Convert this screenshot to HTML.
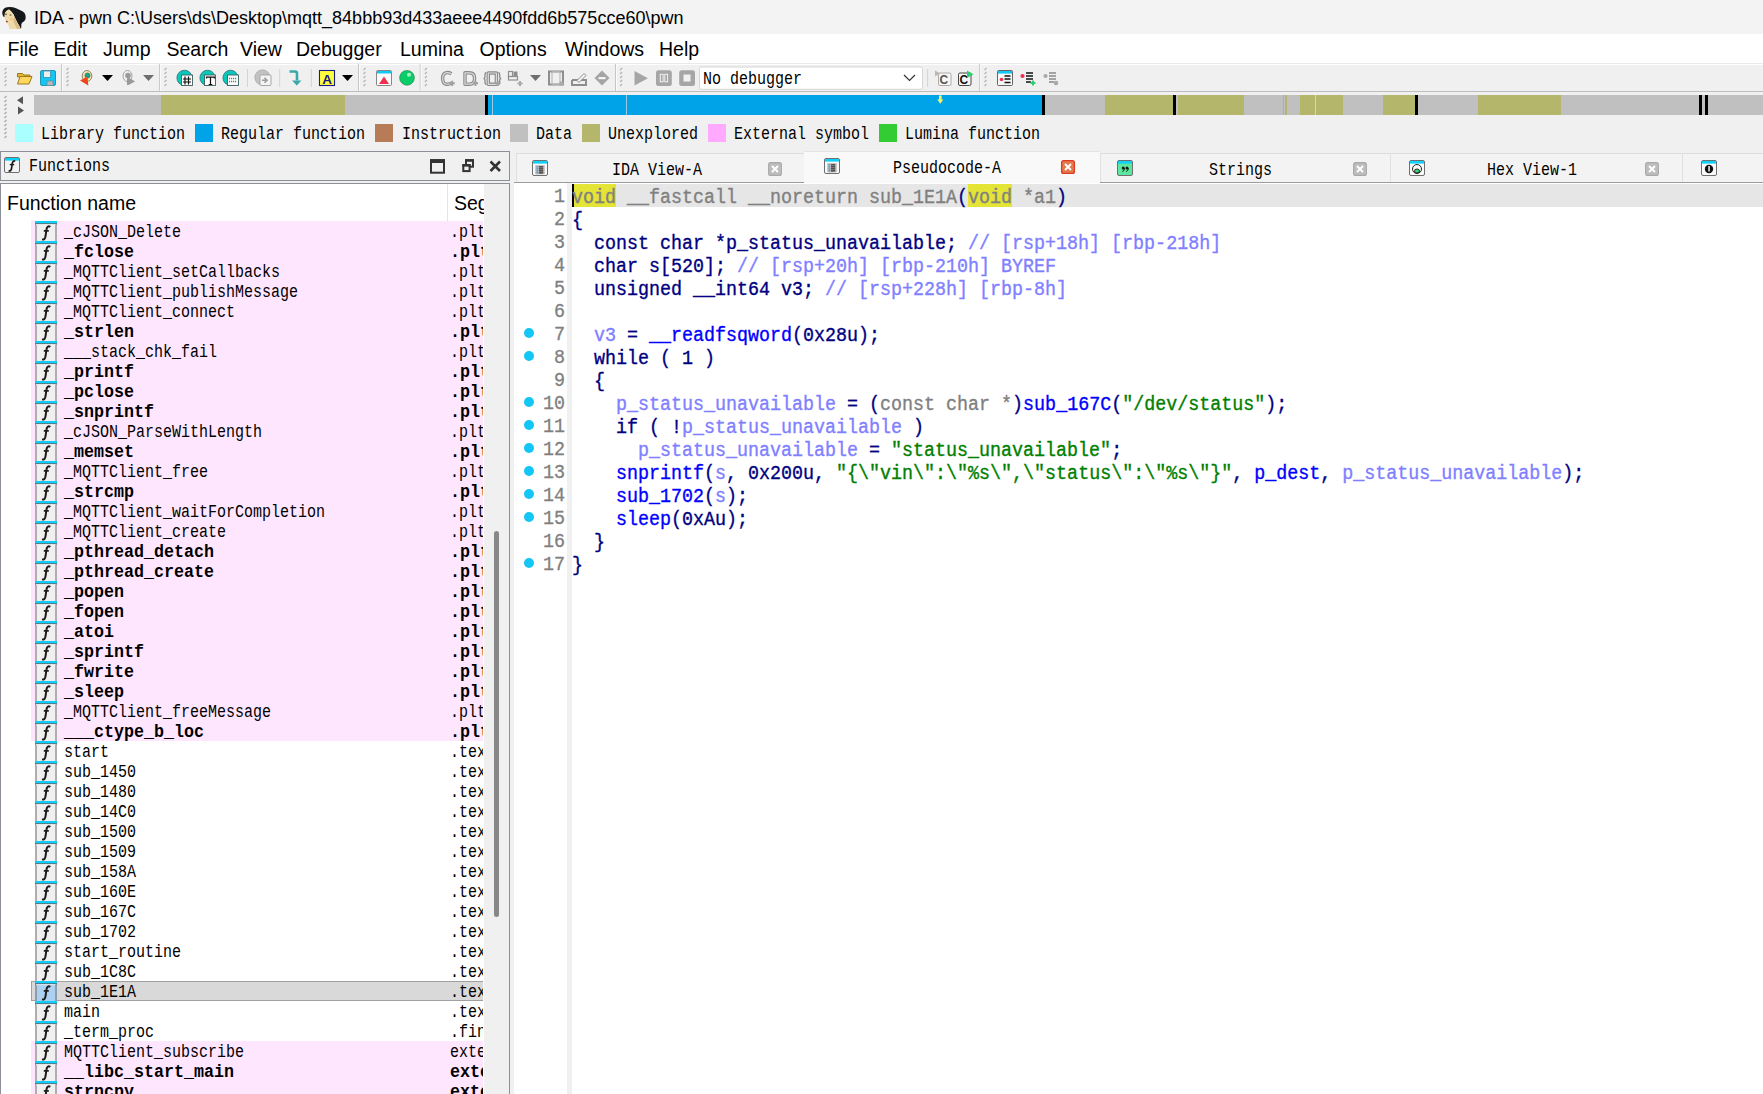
<!DOCTYPE html><html><head><meta charset="utf-8"><title>IDA</title><style>
*{margin:0;padding:0;box-sizing:border-box}
html,body{width:1763px;height:1094px;overflow:hidden;background:#f0f0f0;position:relative;font-family:"Liberation Sans",sans-serif}
.a{position:absolute}
.mono{font-family:"Liberation Mono",monospace}
#title{left:0;top:0;width:1763px;height:34px;background:#f3f3f3}
#menu{left:0;top:34px;width:1763px;height:29px;background:#fff}
.mi{position:absolute;top:36px;font-size:19.5px;color:#000;line-height:26px;white-space:pre}
#tb{left:0;top:63px;width:1763px;height:29px;background:#f0f0f0;border-top:1px solid #ebebeb;border-bottom:1px solid #bdbdbd;box-shadow:inset 0 1px 0 #fdfdfd}
.nav{position:absolute;top:95px;height:20px}
.leg{position:absolute;top:124px;width:18px;height:18px}
.legt{position:absolute;top:124px;font-size:17.5px;line-height:20px;color:#000;white-space:pre;font-family:"Liberation Mono",monospace;transform-origin:0 0;transform:scaleX(0.857)}
.code{position:absolute;left:572px;font-family:"Liberation Mono",monospace;font-size:19.5px;line-height:23px;height:23px;white-space:pre;color:#000080;transform-origin:0 0;transform:scaleX(0.9402);-webkit-text-stroke:0.35px currentColor}
.ln{position:absolute;left:465px;width:100px;text-align:right;font-family:"Liberation Mono",monospace;font-size:19.5px;line-height:23px;height:23px;color:#808080;transform-origin:100% 0;transform:scaleX(0.9402);-webkit-text-stroke:0.3px currentColor}
.dot{position:absolute;left:523.5px;width:10px;height:10px;border-radius:50%;background:#13c6f5}
.g{color:#808080}.v{color:#8080ff}.f{color:#0000ff}.s{color:#008000}.n{color:#000080}
.yl{background:#e4e436}
.row{position:absolute;left:31px;width:452px;height:20px}
.fn{position:absolute;left:64px;font-family:"Liberation Mono",monospace;font-size:17.5px;line-height:20px;color:#000;white-space:pre;transform-origin:0 0;transform:scaleX(0.857)}
.fn.b{font-weight:bold;transform:scaleX(0.952)}
.sgw{position:absolute;left:450px;width:33px;height:20px;overflow:hidden}
.sg{position:absolute;left:0;top:1px;font-family:"Liberation Mono",monospace;font-size:17.5px;line-height:20px;color:#000;white-space:pre;transform-origin:0 0;transform:scaleX(0.857)}
.sg.b{font-weight:bold;transform:scaleX(0.952)}
.ss{position:absolute;font-family:"Liberation Mono",monospace;font-size:17.5px;line-height:20px;color:#000;white-space:pre;transform-origin:0 0;transform:scaleX(0.857)}
.ic{position:absolute;left:35px;width:22px;height:20px}
</style></head><body>
<svg width="0" height="0" style="position:absolute"><defs><g id="fi"><rect x="0" y="0" width="22" height="2.6" fill="#10cdfa"/><rect x="0" y="2.4" width="22" height="0.9" fill="#3a4a50"/><rect x="0.5" y="3" width="1" height="17" fill="#6c6c6c"/><rect x="20.5" y="3" width="1" height="17" fill="#6c6c6c"/><rect x="1" y="3.3" width="19.5" height="0.8" fill="#fafafa"/><path d="M15.3 5.9C13.6 4.7 12 5.4 11.5 8.3L10.5 15.3C10.2 17.6 9 18.9 7 18.4" fill="none" stroke="#1c1c1c" stroke-width="2"/><path d="M8.8 9.9H13.8" stroke="#1c1c1c" stroke-width="1.7"/></g></defs></svg>
<div id="title" class="a"></div>
<div class="a" style="left:34px;top:5px;font-size:18px;line-height:26px;color:#000;white-space:pre">IDA - pwn C:\Users\ds\Desktop\mqtt_84bbb93d433aeee4490fdd6b575cce60\pwn</div>
<div id="menu" class="a"></div>
<div class="mi" style="left:7.5px">File</div>
<div class="mi" style="left:53.5px">Edit</div>
<div class="mi" style="left:103px">Jump</div>
<div class="mi" style="left:166.5px">Search</div>
<div class="mi" style="left:240px">View</div>
<div class="mi" style="left:296px">Debugger</div>
<div class="mi" style="left:400px">Lumina</div>
<div class="mi" style="left:479.5px">Options</div>
<div class="mi" style="left:565px">Windows</div>
<div class="mi" style="left:659px">Help</div>
<div id="tb" class="a"></div>
<svg class="a" style="left:0;top:0" width="1763" height="95" viewBox="0 0 1763 95"><path d="M2.3 12Q3 8 7 7.2Q12 6.5 16 8.3Q19.5 9.8 22 11Q25.2 12.5 25.6 16Q26 20 23.8 21.5Q21.5 22.5 21.3 24.5Q21.5 27 21 29L20.8 29Q19.5 26 17.5 23Q16 20 14.5 17Q14 13.5 9 9.5Q6 10.5 5 13Q4.5 15 4.8 17L3.2 16.5Q2 14.5 2.3 12Z" fill="#15171a"/><path d="M9 9.5Q14 13.5 14.5 17Q16 20 17.5 23Q19.5 26 20.8 29L9.5 29Q9 26 7.5 23.5Q5.5 21.5 5 19Q4.5 16 4.8 13.5Q5.5 10.5 9 9.5Z" fill="#efdcaa"/><path d="M14.5 17Q16 20 17.5 23Q19.5 26 20.8 29L17 29Q15 25 13.5 22Q13 19.5 14.5 17Z" fill="#d9bd88"/><ellipse cx="11.5" cy="19" rx="2" ry="1.5" fill="#f0b890" opacity="0.6"/><ellipse cx="6" cy="14.2" rx="1.1" ry="0.8" fill="#6a5a40"/><ellipse cx="10.5" cy="15" rx="1.2" ry="0.8" fill="#7a6a50"/><path d="M5.8 21Q7.2 20.5 8.3 21.3Q7.6 22.6 6.2 22.4z" fill="#a8402a"/><line x1="4.5" y1="70" x2="6.5" y2="68" stroke="#b2b2b2" stroke-width="1.1"/><line x1="4.5" y1="74" x2="6.5" y2="72" stroke="#b2b2b2" stroke-width="1.1"/><line x1="4.5" y1="78" x2="6.5" y2="76" stroke="#b2b2b2" stroke-width="1.1"/><line x1="4.5" y1="82" x2="6.5" y2="80" stroke="#b2b2b2" stroke-width="1.1"/><line x1="4.5" y1="86" x2="6.5" y2="84" stroke="#b2b2b2" stroke-width="1.1"/><path d="M17.5 73.5h5l1.5 1.5h6v2h-12.5z" fill="#e9b52e" stroke="#9c7a22" stroke-width="1"/><path d="M17.5 84h11.5l3-7.5h-12z" fill="#ffd75e" stroke="#9c7a22" stroke-width="1"/><rect x="40.5" y="70.5" width="15" height="15" rx="1.5" fill="#12c6f3" stroke="#2a93b3"/><rect x="43.5" y="71" width="7" height="6.5" fill="#eeeeee" stroke="#3a8fb0" stroke-width="0.8"/><rect x="47" y="81" width="6" height="4.5" fill="#b9b9b9" stroke="#5d8fa3" stroke-width="0.8"/><rect x="61.0" y="64" width="1" height="27" fill="#c6c6c6"/><rect x="62.0" y="64" width="1" height="27" fill="#fbfbfb"/><line x1="66.5" y1="70" x2="68.5" y2="68" stroke="#b2b2b2" stroke-width="1.1"/><line x1="66.5" y1="74" x2="68.5" y2="72" stroke="#b2b2b2" stroke-width="1.1"/><line x1="66.5" y1="78" x2="68.5" y2="76" stroke="#b2b2b2" stroke-width="1.1"/><line x1="66.5" y1="82" x2="68.5" y2="80" stroke="#b2b2b2" stroke-width="1.1"/><line x1="66.5" y1="86" x2="68.5" y2="84" stroke="#b2b2b2" stroke-width="1.1"/><ellipse cx="87" cy="76" rx="4.8" ry="5.5" fill="#f7e6b4" stroke="#8a7a55" stroke-width="0.9"/><circle cx="87.5" cy="75.5" r="2.6" fill="#17a98a" stroke="#2c6a5a" stroke-width="0.6"/><path d="M80 80.5l7.5-4l0.8 9z" fill="#f0461c"/><path d="M102 75H113L107.5 81Z" fill="#000"/><ellipse cx="127.5" cy="76" rx="4.5" ry="5.5" fill="none" stroke="#9a9a9a" stroke-width="0.9"/><circle cx="128" cy="75.5" r="2.8" fill="#9a9a9a"/><path d="M127 77h1l7 4.5-6.5 3.5-1.5 0z" fill="#9a9a9a"/><path d="M143 75H154L148.5 81Z" fill="#6e6e6e"/><rect x="159.1" y="64" width="1" height="27" fill="#c6c6c6"/><rect x="160.1" y="64" width="1" height="27" fill="#fbfbfb"/><line x1="164.5" y1="70" x2="166.5" y2="68" stroke="#b2b2b2" stroke-width="1.1"/><line x1="164.5" y1="74" x2="166.5" y2="72" stroke="#b2b2b2" stroke-width="1.1"/><line x1="164.5" y1="78" x2="166.5" y2="76" stroke="#b2b2b2" stroke-width="1.1"/><line x1="164.5" y1="82" x2="166.5" y2="80" stroke="#b2b2b2" stroke-width="1.1"/><line x1="164.5" y1="86" x2="166.5" y2="84" stroke="#b2b2b2" stroke-width="1.1"/><circle cx="184.5" cy="77.8" r="7.6" fill="#08c8bc" stroke="#2f6f6a" stroke-width="0.8"/><rect x="181.5" y="75" width="11" height="10.5" fill="#fdfdfd" stroke="#3b5f5c" stroke-width="0.9"/><path d="M185 76.5v8M188.5 76.5v8M183 79h8M183 82h8" stroke="#111" stroke-width="1.2"/><circle cx="207.5" cy="77.8" r="7.6" fill="#08c8bc" stroke="#2f6f6a" stroke-width="0.8"/><rect x="204.5" y="75" width="11" height="10.5" fill="#fdfdfd" stroke="#3b5f5c" stroke-width="0.9"/><path d="M206.5 78.5v-1.3h8v1.3M210.5 77v7.5M208.7 84.5h3.6" fill="none" stroke="#111" stroke-width="1.2"/><circle cx="230.5" cy="77.8" r="7.6" fill="#08c8bc" stroke="#2f6f6a" stroke-width="0.8"/><rect x="227.5" y="75" width="11" height="10.5" fill="#fdfdfd" stroke="#3b5f5c" stroke-width="0.9"/><path d="M229 78.5h8M229 81.5h8" stroke="#777" stroke-width="1.5" stroke-dasharray="1.2 0.8"/><rect x="247.0" y="69" width="1" height="18" fill="#d4d4d4"/><circle cx="262.5" cy="77.5" r="7.6" fill="#c2c2c2" stroke="#a5a5a5" stroke-width="0.8"/><rect x="260" y="75" width="11" height="10.5" rx="1" fill="#f4f4f4" stroke="#a8a8a8"/><path d="M262 80.3h4M264.5 77.8l2.5 2.5-2.5 2.5" stroke="#9c9c9c" stroke-width="1.6" fill="none"/><rect x="279.2" y="69" width="1" height="18" fill="#d4d4d4"/><path d="M289.5 71.5h5.5q2 0 2 2v7" stroke="#3aa8aa" stroke-width="2.6" fill="none"/><path d="M292 80.5h9.5l-4.75 5z" fill="#3aa8aa"/><rect x="310.8" y="69" width="1" height="18" fill="#d4d4d4"/><rect x="319.5" y="70.5" width="15" height="15" fill="#ffff3c" stroke="#1d1d8a" stroke-width="1.1"/><text x="327" y="83.6" font-family="Liberation Sans" font-weight="bold" font-size="13.5" fill="#1b1b86" text-anchor="middle">A</text><path d="M342 75H353L347.5 81Z" fill="#000"/><rect x="358.0" y="64" width="1" height="27" fill="#c6c6c6"/><rect x="359.0" y="64" width="1" height="27" fill="#fbfbfb"/><line x1="363.5" y1="70" x2="365.5" y2="68" stroke="#b2b2b2" stroke-width="1.1"/><line x1="363.5" y1="74" x2="365.5" y2="72" stroke="#b2b2b2" stroke-width="1.1"/><line x1="363.5" y1="78" x2="365.5" y2="76" stroke="#b2b2b2" stroke-width="1.1"/><line x1="363.5" y1="82" x2="365.5" y2="80" stroke="#b2b2b2" stroke-width="1.1"/><line x1="363.5" y1="86" x2="365.5" y2="84" stroke="#b2b2b2" stroke-width="1.1"/><rect x="376.5" y="70.5" width="15" height="15" rx="1" fill="#fafafa" stroke="#7a7a7a" stroke-width="0.9"/><rect x="377" y="71" width="14" height="2.5" fill="#13c8f5"/><path d="M379 84h10l-5-7.5z" fill="#f2304e"/><circle cx="407" cy="77.8" r="7.4" fill="#0acd6a" stroke="#2a7a4a" stroke-width="0.6"/><circle cx="409" cy="74.8" r="2" fill="#a6f0c6"/><rect x="419.7" y="64" width="1" height="27" fill="#c6c6c6"/><rect x="420.7" y="64" width="1" height="27" fill="#fbfbfb"/><line x1="424.9" y1="70" x2="426.9" y2="68" stroke="#b2b2b2" stroke-width="1.1"/><line x1="424.9" y1="74" x2="426.9" y2="72" stroke="#b2b2b2" stroke-width="1.1"/><line x1="424.9" y1="78" x2="426.9" y2="76" stroke="#b2b2b2" stroke-width="1.1"/><line x1="424.9" y1="82" x2="426.9" y2="80" stroke="#b2b2b2" stroke-width="1.1"/><line x1="424.9" y1="86" x2="426.9" y2="84" stroke="#b2b2b2" stroke-width="1.1"/><path d="M451.5 73.8Q449 72.3 446.5 72.6Q442.6 73.3 442.6 78.4Q442.6 83.6 446.5 84.2Q449 84.5 451.5 83" fill="none" stroke="#8a8a8a" stroke-width="3.4" stroke-linejoin="round"/><path d="M451.5 73.8Q449 72.3 446.5 72.6Q442.6 73.3 442.6 78.4Q442.6 83.6 446.5 84.2Q449 84.5 451.5 83" fill="none" stroke="#dcdcdc" stroke-width="1.2" stroke-linejoin="round"/><path d="M452.2 80.7v5.2M449.59999999999997 83.3h5.2" stroke="#a0a0a0" stroke-width="1.9"/><path d="M465 72.8V84.2H469.3Q474.6 84.2 474.6 78.5Q474.6 72.8 469.3 72.8Z" fill="none" stroke="#8a8a8a" stroke-width="3.4" stroke-linejoin="round"/><path d="M465 72.8V84.2H469.3Q474.6 84.2 474.6 78.5Q474.6 72.8 469.3 72.8Z" fill="none" stroke="#dcdcdc" stroke-width="1.2" stroke-linejoin="round"/><path d="M475.5 80.7v5.2M472.9 83.3h5.2" stroke="#a0a0a0" stroke-width="1.9"/><path d="M488.3 73H496.4V84.3H488.3Z" fill="none" stroke="#8a8a8a" stroke-width="3.4" stroke-linejoin="round"/><path d="M488.3 73H496.4V84.3H488.3Z" fill="none" stroke="#dcdcdc" stroke-width="1.2" stroke-linejoin="round"/><path d="M486.4 72.5Q485 72.5 485 74.5V77.3L484 78.5L485 79.7V82.5Q485 84.5 486.4 84.5M498.3 72.5Q499.7 72.5 499.7 74.5V77.3L500.7 78.5L499.7 79.7V82.5Q499.7 84.5 498.3 84.5" fill="none" stroke="#8a8a8a" stroke-width="1.3"/><path d="M497.8 80.7v5.2M495.2 83.3h5.2" stroke="#a0a0a0" stroke-width="1.9"/><rect x="508.5" y="71.5" width="4" height="5" fill="none" stroke="#8e8e8e" stroke-width="1.2"/><rect x="513.5" y="71.5" width="4" height="5" fill="#8e8e8e"/><rect x="508.5" y="76.5" width="9" height="3.5" fill="none" stroke="#8e8e8e" stroke-width="1.2"/><path d="M520 81v5M517.5 83.5h5" stroke="#aaa" stroke-width="2"/><path d="M530 75H541L535.5 81Z" fill="#6e6e6e"/><rect x="549" y="71.5" width="14" height="13" fill="none" stroke="#8e8e8e" stroke-width="2"/><rect x="552" y="71.5" width="8" height="13" fill="none" stroke="#b0b0b0" stroke-width="1"/><circle cx="561.5" cy="83.5" r="2.3" fill="#aaa"/><path d="M572 80h14v6M572 80v5h14" fill="none" stroke="#8e8e8e" stroke-width="2"/><path d="M577 80.5l7-7 2 2-7 7z" fill="#f4f4f4" stroke="#8e8e8e" stroke-width="1"/><path d="M602 70.5l7.5 7.5-7.5 7.5-7.5-7.5z" fill="#a4a4a4"/><rect x="598.5" y="77" width="7" height="2.2" fill="#f4f4f4"/><rect x="615.0" y="64" width="1" height="27" fill="#c6c6c6"/><rect x="616.0" y="64" width="1" height="27" fill="#fbfbfb"/><line x1="620.1" y1="70" x2="622.1" y2="68" stroke="#b2b2b2" stroke-width="1.1"/><line x1="620.1" y1="74" x2="622.1" y2="72" stroke="#b2b2b2" stroke-width="1.1"/><line x1="620.1" y1="78" x2="622.1" y2="76" stroke="#b2b2b2" stroke-width="1.1"/><line x1="620.1" y1="82" x2="622.1" y2="80" stroke="#b2b2b2" stroke-width="1.1"/><line x1="620.1" y1="86" x2="622.1" y2="84" stroke="#b2b2b2" stroke-width="1.1"/><path d="M634.5 71l13.5 7.2-13.5 7.3z" fill="#a6a6a6"/><rect x="656" y="70.2" width="15.8" height="15.8" rx="2.5" fill="#a6a6a6"/><rect x="660.3" y="74.3" width="2.8" height="7.5" fill="none" stroke="#f2f2f2" stroke-width="1"/><rect x="664.8" y="74.3" width="2.8" height="7.5" fill="none" stroke="#f2f2f2" stroke-width="1"/><rect x="679.2" y="70.2" width="15.8" height="15.8" rx="2.5" fill="#a6a6a6"/><rect x="683.5" y="74.5" width="7" height="7" fill="#f2f2f2"/><rect x="699.5" y="67" width="223" height="22.3" rx="1.5" fill="#fff" stroke="#d6d6d6"/><path d="M904 75l5.5 5.5 5.5-5.5" fill="none" stroke="#333" stroke-width="1.2"/><rect x="927.1" y="69" width="1" height="18" fill="#d4d4d4"/><rect x="938.5" y="73" width="12.5" height="12.5" rx="1.5" fill="#f6f6f6" stroke="#999" stroke-width="0.8"/><path d="M935 70.5v6l5.5-3z" fill="#b9b9b9"/><text x="939.5" y="83.8" font-family="Liberation Sans" font-weight="bold" font-size="12" fill="#555">C</text><rect x="958.5" y="73" width="12.5" height="12.5" rx="1.5" fill="#f6f6f6" stroke="#333" stroke-width="0.9"/><text x="959.5" y="83.8" font-family="Liberation Sans" font-weight="bold" font-size="12" fill="#111">C</text><path d="M967 70.5v7.5l6.5-3.7z" fill="#2fcf6f"/><rect x="979.1" y="64" width="1" height="27" fill="#c6c6c6"/><rect x="980.1" y="64" width="1" height="27" fill="#fbfbfb"/><line x1="984.5" y1="70" x2="986.5" y2="68" stroke="#b2b2b2" stroke-width="1.1"/><line x1="984.5" y1="74" x2="986.5" y2="72" stroke="#b2b2b2" stroke-width="1.1"/><line x1="984.5" y1="78" x2="986.5" y2="76" stroke="#b2b2b2" stroke-width="1.1"/><line x1="984.5" y1="82" x2="986.5" y2="80" stroke="#b2b2b2" stroke-width="1.1"/><line x1="984.5" y1="86" x2="986.5" y2="84" stroke="#b2b2b2" stroke-width="1.1"/><rect x="997.5" y="70.5" width="15" height="15" rx="1" fill="#f8f8f8" stroke="#555" stroke-width="0.9"/><rect x="998" y="71" width="14" height="2.6" fill="#13c8f5"/><circle cx="1001.5" cy="79.5" r="1.8" fill="#f0304e"/><path d="M1004.5 76h6M1004.5 79h6M1004.5 82.5h6" stroke="#111" stroke-width="1.6"/><circle cx="1022.5" cy="76" r="2.1" fill="#f0304e"/><path d="M1026 73h7M1026 76h7M1026 79h7M1026 82h5" stroke="#111" stroke-width="1.6"/><path d="M1033 80.5v5M1030.5 83h5" stroke="#2fcf6f" stroke-width="2"/><circle cx="1045.5" cy="76" r="2.1" fill="#aaa"/><path d="M1049 73h7M1049 76h7M1049 79h7M1049 82h5" stroke="#888" stroke-width="1.6"/><circle cx="1056" cy="83" r="2.3" fill="#aaa"/></svg>
<div class="ss" style="left:703px;top:69px">No debugger</div>
<div class="nav" style="left:34px;width:1729px;background:#c0c0c0"></div>
<div class="nav" style="left:34px;width:127px;background:#c0c0c0"></div>
<div class="nav" style="left:161px;width:184px;background:#b4b76b"></div>
<div class="nav" style="left:345px;width:140px;background:#c0c0c0"></div>
<div class="nav" style="left:485px;width:3px;background:#000"></div>
<div class="nav" style="left:488px;width:554px;background:#00a2e8"></div>
<div class="nav" style="left:1042px;width:3px;background:#000"></div>
<div class="nav" style="left:1045px;width:60px;background:#c0c0c0"></div>
<div class="nav" style="left:1105px;width:68px;background:#b4b76b"></div>
<div class="nav" style="left:1173px;width:3px;background:#000"></div>
<div class="nav" style="left:1176px;width:2px;background:#c0c0c0"></div>
<div class="nav" style="left:1178px;width:66px;background:#b4b76b"></div>
<div class="nav" style="left:1244px;width:39px;background:#c0c0c0"></div>
<div class="nav" style="left:1283px;width:1px;background:#b4b76b"></div>
<div class="nav" style="left:1285px;width:2px;background:#b4b76b"></div>
<div class="nav" style="left:1287px;width:13px;background:#c0c0c0"></div>
<div class="nav" style="left:1300px;width:43px;background:#b4b76b"></div>
<div class="nav" style="left:1343px;width:40px;background:#c0c0c0"></div>
<div class="nav" style="left:1383px;width:32px;background:#b4b76b"></div>
<div class="nav" style="left:1415px;width:3px;background:#000"></div>
<div class="nav" style="left:1418px;width:60px;background:#c0c0c0"></div>
<div class="nav" style="left:1478px;width:83px;background:#b4b76b"></div>
<div class="nav" style="left:1561px;width:138px;background:#c0c0c0"></div>
<div class="nav" style="left:1699px;width:3px;background:#000"></div>
<div class="nav" style="left:1702px;width:3px;background:#c0c0c0"></div>
<div class="nav" style="left:1705px;width:3px;background:#000"></div>
<div class="nav" style="left:1708px;width:55px;background:#c0c0c0"></div>
<div class="nav" style="left:492px;width:1px;background:#9cc8e0"></div>
<div class="nav" style="left:626px;width:1px;background:#9cc8e0"></div>
<div class="nav" style="left:1315px;width:1px;background:#d8d8b0"></div>
<svg class="a" style="left:930px;top:94px" width="20" height="14" viewBox="930 94 20 14"><rect x="939" y="95.5" width="2.6" height="4.5" fill="#f4f46a"/><path d="M937.3 99.5h6l-3 4.3z" fill="#f4f46a"/></svg>
<svg class="a" style="left:0;top:92px" width="34" height="52" viewBox="0 92 34 52"><path d="M17 100.3l6-4v8z" fill="#555"/><path d="M18 106.5l6 4-6 4z" fill="#555"/><line x1="4.5" y1="98" x2="6.5" y2="96" stroke="#a8a8a8" stroke-width="1.2"/><line x1="4.5" y1="102" x2="6.5" y2="100" stroke="#a8a8a8" stroke-width="1.2"/><line x1="4.5" y1="106" x2="6.5" y2="104" stroke="#a8a8a8" stroke-width="1.2"/><line x1="4.5" y1="110" x2="6.5" y2="108" stroke="#a8a8a8" stroke-width="1.2"/><line x1="4.5" y1="114" x2="6.5" y2="112" stroke="#a8a8a8" stroke-width="1.2"/><line x1="4.5" y1="118" x2="6.5" y2="116" stroke="#a8a8a8" stroke-width="1.2"/><line x1="4.5" y1="122" x2="6.5" y2="120" stroke="#a8a8a8" stroke-width="1.2"/><line x1="4.5" y1="126" x2="6.5" y2="124" stroke="#a8a8a8" stroke-width="1.2"/><line x1="4.5" y1="130" x2="6.5" y2="128" stroke="#a8a8a8" stroke-width="1.2"/><line x1="4.5" y1="134" x2="6.5" y2="132" stroke="#a8a8a8" stroke-width="1.2"/><line x1="4.5" y1="138" x2="6.5" y2="136" stroke="#a8a8a8" stroke-width="1.2"/></svg>
<div class="leg" style="left:15px;background:#aaffff"></div><div class="legt" style="left:41px">Library function</div>
<div class="leg" style="left:195px;background:#00a2e8"></div><div class="legt" style="left:221px">Regular function</div>
<div class="leg" style="left:375px;background:#b87b57"></div><div class="legt" style="left:402px">Instruction</div>
<div class="leg" style="left:510px;background:#c0c0c0"></div><div class="legt" style="left:536px">Data</div>
<div class="leg" style="left:582px;background:#b4b76b"></div><div class="legt" style="left:608px">Unexplored</div>
<div class="leg" style="left:708px;background:#ffaaff"></div><div class="legt" style="left:734px">External symbol</div>
<div class="leg" style="left:879px;background:#33cc33"></div><div class="legt" style="left:905px">Lumina function</div>
<div class="a" style="left:0;top:151px;width:510px;height:30px;border:1px solid #8c9096;background:#f0f0f0"></div>
<div class="ss" style="left:29px;top:156px">Functions</div>
<svg class="a" style="left:0;top:150px" width="510" height="32" viewBox="0 150 510 32"><rect x="4.5" y="157.5" width="15" height="15" rx="1.5" fill="#f4f4f4" stroke="#6f6f6f"/><rect x="5" y="158" width="14" height="2.6" fill="#0fd0fa"/><path d="M15.2 161.4C13.9 160.5 12.7 161 12.3 163.3L11.5 168.6C11.2 170.4 10.3 171.2 8.6 170.8" fill="none" stroke="#1c1c1c" stroke-width="1.7"/><path d="M9.8 164.6H14.2" stroke="#1c1c1c" stroke-width="1.4"/><rect x="431" y="160.2" width="13" height="12.5" fill="none" stroke="#333" stroke-width="2"/><rect x="430" y="159.2" width="15" height="3.8" fill="#333"/><rect x="466" y="160.2" width="7" height="6.5" fill="none" stroke="#333" stroke-width="2"/><rect x="465" y="159.2" width="9" height="2.5" fill="#333"/><rect x="463.3" y="165.1" width="6.3" height="6" fill="#f0f0f0" stroke="#333" stroke-width="2"/><rect x="462.3" y="164.1" width="8.3" height="2.5" fill="#333"/><path d="M490.5 161.5l9.5 9.5M500 161.5l-9.5 9.5" stroke="#333" stroke-width="2.6"/></svg>
<div class="a" style="left:0;top:183px;width:510px;height:911px;border:1px solid #8c9096;border-bottom:none;background:#fff"></div>
<div class="a" style="left:7px;top:190px;font-size:19.5px;line-height:26px;color:#000;white-space:pre">Function name</div>
<div class="a" style="left:447px;top:184px;width:1px;height:37px;background:#e5e5e5"></div>
<div class="a" style="left:454px;top:190px;width:30px;height:26px;overflow:hidden"><div style="font-size:19.5px;line-height:26px;color:#000;white-space:pre">Seg</div></div>
<div class="a" style="left:484px;top:184px;width:25px;height:910px;background:#f0f0f0"></div>
<div class="a" style="left:494px;top:531px;width:5px;height:386px;border-radius:3px;background:#888"></div>
<div class="row" style="top:221px;background:#ffe6ff"></div>
<svg class="ic" style="top:221px" width="22" height="20" viewBox="0 0 22 20"><rect x="0" y="0" width="22" height="20" fill="#f0f0f0"/><use href="#fi"/></svg>
<div class="fn" style="top:222px">_cJSON_Delete</div>
<div class="sgw" style="top:221px"><div class="sg">.plt</div></div>
<div class="row" style="top:241px;background:#ffe6ff"></div>
<svg class="ic" style="top:241px" width="22" height="20" viewBox="0 0 22 20"><rect x="0" y="0" width="22" height="20" fill="#f0f0f0"/><use href="#fi"/></svg>
<div class="fn b" style="top:242px">_fclose</div>
<div class="sgw" style="top:241px"><div class="sg b">.plt</div></div>
<div class="row" style="top:261px;background:#ffe6ff"></div>
<svg class="ic" style="top:261px" width="22" height="20" viewBox="0 0 22 20"><rect x="0" y="0" width="22" height="20" fill="#f0f0f0"/><use href="#fi"/></svg>
<div class="fn" style="top:262px">_MQTTClient_setCallbacks</div>
<div class="sgw" style="top:261px"><div class="sg">.plt</div></div>
<div class="row" style="top:281px;background:#ffe6ff"></div>
<svg class="ic" style="top:281px" width="22" height="20" viewBox="0 0 22 20"><rect x="0" y="0" width="22" height="20" fill="#f0f0f0"/><use href="#fi"/></svg>
<div class="fn" style="top:282px">_MQTTClient_publishMessage</div>
<div class="sgw" style="top:281px"><div class="sg">.plt</div></div>
<div class="row" style="top:301px;background:#ffe6ff"></div>
<svg class="ic" style="top:301px" width="22" height="20" viewBox="0 0 22 20"><rect x="0" y="0" width="22" height="20" fill="#f0f0f0"/><use href="#fi"/></svg>
<div class="fn" style="top:302px">_MQTTClient_connect</div>
<div class="sgw" style="top:301px"><div class="sg">.plt</div></div>
<div class="row" style="top:321px;background:#ffe6ff"></div>
<svg class="ic" style="top:321px" width="22" height="20" viewBox="0 0 22 20"><rect x="0" y="0" width="22" height="20" fill="#f0f0f0"/><use href="#fi"/></svg>
<div class="fn b" style="top:322px">_strlen</div>
<div class="sgw" style="top:321px"><div class="sg b">.plt</div></div>
<div class="row" style="top:341px;background:#ffe6ff"></div>
<svg class="ic" style="top:341px" width="22" height="20" viewBox="0 0 22 20"><rect x="0" y="0" width="22" height="20" fill="#f0f0f0"/><use href="#fi"/></svg>
<div class="fn" style="top:342px">___stack_chk_fail</div>
<div class="sgw" style="top:341px"><div class="sg">.plt</div></div>
<div class="row" style="top:361px;background:#ffe6ff"></div>
<svg class="ic" style="top:361px" width="22" height="20" viewBox="0 0 22 20"><rect x="0" y="0" width="22" height="20" fill="#f0f0f0"/><use href="#fi"/></svg>
<div class="fn b" style="top:362px">_printf</div>
<div class="sgw" style="top:361px"><div class="sg b">.plt</div></div>
<div class="row" style="top:381px;background:#ffe6ff"></div>
<svg class="ic" style="top:381px" width="22" height="20" viewBox="0 0 22 20"><rect x="0" y="0" width="22" height="20" fill="#f0f0f0"/><use href="#fi"/></svg>
<div class="fn b" style="top:382px">_pclose</div>
<div class="sgw" style="top:381px"><div class="sg b">.plt</div></div>
<div class="row" style="top:401px;background:#ffe6ff"></div>
<svg class="ic" style="top:401px" width="22" height="20" viewBox="0 0 22 20"><rect x="0" y="0" width="22" height="20" fill="#f0f0f0"/><use href="#fi"/></svg>
<div class="fn b" style="top:402px">_snprintf</div>
<div class="sgw" style="top:401px"><div class="sg b">.plt</div></div>
<div class="row" style="top:421px;background:#ffe6ff"></div>
<svg class="ic" style="top:421px" width="22" height="20" viewBox="0 0 22 20"><rect x="0" y="0" width="22" height="20" fill="#f0f0f0"/><use href="#fi"/></svg>
<div class="fn" style="top:422px">_cJSON_ParseWithLength</div>
<div class="sgw" style="top:421px"><div class="sg">.plt</div></div>
<div class="row" style="top:441px;background:#ffe6ff"></div>
<svg class="ic" style="top:441px" width="22" height="20" viewBox="0 0 22 20"><rect x="0" y="0" width="22" height="20" fill="#f0f0f0"/><use href="#fi"/></svg>
<div class="fn b" style="top:442px">_memset</div>
<div class="sgw" style="top:441px"><div class="sg b">.plt</div></div>
<div class="row" style="top:461px;background:#ffe6ff"></div>
<svg class="ic" style="top:461px" width="22" height="20" viewBox="0 0 22 20"><rect x="0" y="0" width="22" height="20" fill="#f0f0f0"/><use href="#fi"/></svg>
<div class="fn" style="top:462px">_MQTTClient_free</div>
<div class="sgw" style="top:461px"><div class="sg">.plt</div></div>
<div class="row" style="top:481px;background:#ffe6ff"></div>
<svg class="ic" style="top:481px" width="22" height="20" viewBox="0 0 22 20"><rect x="0" y="0" width="22" height="20" fill="#f0f0f0"/><use href="#fi"/></svg>
<div class="fn b" style="top:482px">_strcmp</div>
<div class="sgw" style="top:481px"><div class="sg b">.plt</div></div>
<div class="row" style="top:501px;background:#ffe6ff"></div>
<svg class="ic" style="top:501px" width="22" height="20" viewBox="0 0 22 20"><rect x="0" y="0" width="22" height="20" fill="#f0f0f0"/><use href="#fi"/></svg>
<div class="fn" style="top:502px">_MQTTClient_waitForCompletion</div>
<div class="sgw" style="top:501px"><div class="sg">.plt</div></div>
<div class="row" style="top:521px;background:#ffe6ff"></div>
<svg class="ic" style="top:521px" width="22" height="20" viewBox="0 0 22 20"><rect x="0" y="0" width="22" height="20" fill="#f0f0f0"/><use href="#fi"/></svg>
<div class="fn" style="top:522px">_MQTTClient_create</div>
<div class="sgw" style="top:521px"><div class="sg">.plt</div></div>
<div class="row" style="top:541px;background:#ffe6ff"></div>
<svg class="ic" style="top:541px" width="22" height="20" viewBox="0 0 22 20"><rect x="0" y="0" width="22" height="20" fill="#f0f0f0"/><use href="#fi"/></svg>
<div class="fn b" style="top:542px">_pthread_detach</div>
<div class="sgw" style="top:541px"><div class="sg b">.plt</div></div>
<div class="row" style="top:561px;background:#ffe6ff"></div>
<svg class="ic" style="top:561px" width="22" height="20" viewBox="0 0 22 20"><rect x="0" y="0" width="22" height="20" fill="#f0f0f0"/><use href="#fi"/></svg>
<div class="fn b" style="top:562px">_pthread_create</div>
<div class="sgw" style="top:561px"><div class="sg b">.plt</div></div>
<div class="row" style="top:581px;background:#ffe6ff"></div>
<svg class="ic" style="top:581px" width="22" height="20" viewBox="0 0 22 20"><rect x="0" y="0" width="22" height="20" fill="#f0f0f0"/><use href="#fi"/></svg>
<div class="fn b" style="top:582px">_popen</div>
<div class="sgw" style="top:581px"><div class="sg b">.plt</div></div>
<div class="row" style="top:601px;background:#ffe6ff"></div>
<svg class="ic" style="top:601px" width="22" height="20" viewBox="0 0 22 20"><rect x="0" y="0" width="22" height="20" fill="#f0f0f0"/><use href="#fi"/></svg>
<div class="fn b" style="top:602px">_fopen</div>
<div class="sgw" style="top:601px"><div class="sg b">.plt</div></div>
<div class="row" style="top:621px;background:#ffe6ff"></div>
<svg class="ic" style="top:621px" width="22" height="20" viewBox="0 0 22 20"><rect x="0" y="0" width="22" height="20" fill="#f0f0f0"/><use href="#fi"/></svg>
<div class="fn b" style="top:622px">_atoi</div>
<div class="sgw" style="top:621px"><div class="sg b">.plt</div></div>
<div class="row" style="top:641px;background:#ffe6ff"></div>
<svg class="ic" style="top:641px" width="22" height="20" viewBox="0 0 22 20"><rect x="0" y="0" width="22" height="20" fill="#f0f0f0"/><use href="#fi"/></svg>
<div class="fn b" style="top:642px">_sprintf</div>
<div class="sgw" style="top:641px"><div class="sg b">.plt</div></div>
<div class="row" style="top:661px;background:#ffe6ff"></div>
<svg class="ic" style="top:661px" width="22" height="20" viewBox="0 0 22 20"><rect x="0" y="0" width="22" height="20" fill="#f0f0f0"/><use href="#fi"/></svg>
<div class="fn b" style="top:662px">_fwrite</div>
<div class="sgw" style="top:661px"><div class="sg b">.plt</div></div>
<div class="row" style="top:681px;background:#ffe6ff"></div>
<svg class="ic" style="top:681px" width="22" height="20" viewBox="0 0 22 20"><rect x="0" y="0" width="22" height="20" fill="#f0f0f0"/><use href="#fi"/></svg>
<div class="fn b" style="top:682px">_sleep</div>
<div class="sgw" style="top:681px"><div class="sg b">.plt</div></div>
<div class="row" style="top:701px;background:#ffe6ff"></div>
<svg class="ic" style="top:701px" width="22" height="20" viewBox="0 0 22 20"><rect x="0" y="0" width="22" height="20" fill="#f0f0f0"/><use href="#fi"/></svg>
<div class="fn" style="top:702px">_MQTTClient_freeMessage</div>
<div class="sgw" style="top:701px"><div class="sg">.plt</div></div>
<div class="row" style="top:721px;background:#ffe6ff"></div>
<svg class="ic" style="top:721px" width="22" height="20" viewBox="0 0 22 20"><rect x="0" y="0" width="22" height="20" fill="#f0f0f0"/><use href="#fi"/></svg>
<div class="fn b" style="top:722px">___ctype_b_loc</div>
<div class="sgw" style="top:721px"><div class="sg b">.plt</div></div>
<svg class="ic" style="top:741px" width="22" height="20" viewBox="0 0 22 20"><rect x="0" y="0" width="22" height="20" fill="#f0f0f0"/><use href="#fi"/></svg>
<div class="fn" style="top:742px">start</div>
<div class="sgw" style="top:741px"><div class="sg">.text</div></div>
<svg class="ic" style="top:761px" width="22" height="20" viewBox="0 0 22 20"><rect x="0" y="0" width="22" height="20" fill="#f0f0f0"/><use href="#fi"/></svg>
<div class="fn" style="top:762px">sub_1450</div>
<div class="sgw" style="top:761px"><div class="sg">.text</div></div>
<svg class="ic" style="top:781px" width="22" height="20" viewBox="0 0 22 20"><rect x="0" y="0" width="22" height="20" fill="#f0f0f0"/><use href="#fi"/></svg>
<div class="fn" style="top:782px">sub_1480</div>
<div class="sgw" style="top:781px"><div class="sg">.text</div></div>
<svg class="ic" style="top:801px" width="22" height="20" viewBox="0 0 22 20"><rect x="0" y="0" width="22" height="20" fill="#f0f0f0"/><use href="#fi"/></svg>
<div class="fn" style="top:802px">sub_14C0</div>
<div class="sgw" style="top:801px"><div class="sg">.text</div></div>
<svg class="ic" style="top:821px" width="22" height="20" viewBox="0 0 22 20"><rect x="0" y="0" width="22" height="20" fill="#f0f0f0"/><use href="#fi"/></svg>
<div class="fn" style="top:822px">sub_1500</div>
<div class="sgw" style="top:821px"><div class="sg">.text</div></div>
<svg class="ic" style="top:841px" width="22" height="20" viewBox="0 0 22 20"><rect x="0" y="0" width="22" height="20" fill="#f0f0f0"/><use href="#fi"/></svg>
<div class="fn" style="top:842px">sub_1509</div>
<div class="sgw" style="top:841px"><div class="sg">.text</div></div>
<svg class="ic" style="top:861px" width="22" height="20" viewBox="0 0 22 20"><rect x="0" y="0" width="22" height="20" fill="#f0f0f0"/><use href="#fi"/></svg>
<div class="fn" style="top:862px">sub_158A</div>
<div class="sgw" style="top:861px"><div class="sg">.text</div></div>
<svg class="ic" style="top:881px" width="22" height="20" viewBox="0 0 22 20"><rect x="0" y="0" width="22" height="20" fill="#f0f0f0"/><use href="#fi"/></svg>
<div class="fn" style="top:882px">sub_160E</div>
<div class="sgw" style="top:881px"><div class="sg">.text</div></div>
<svg class="ic" style="top:901px" width="22" height="20" viewBox="0 0 22 20"><rect x="0" y="0" width="22" height="20" fill="#f0f0f0"/><use href="#fi"/></svg>
<div class="fn" style="top:902px">sub_167C</div>
<div class="sgw" style="top:901px"><div class="sg">.text</div></div>
<svg class="ic" style="top:921px" width="22" height="20" viewBox="0 0 22 20"><rect x="0" y="0" width="22" height="20" fill="#f0f0f0"/><use href="#fi"/></svg>
<div class="fn" style="top:922px">sub_1702</div>
<div class="sgw" style="top:921px"><div class="sg">.text</div></div>
<svg class="ic" style="top:941px" width="22" height="20" viewBox="0 0 22 20"><rect x="0" y="0" width="22" height="20" fill="#f0f0f0"/><use href="#fi"/></svg>
<div class="fn" style="top:942px">start_routine</div>
<div class="sgw" style="top:941px"><div class="sg">.text</div></div>
<svg class="ic" style="top:961px" width="22" height="20" viewBox="0 0 22 20"><rect x="0" y="0" width="22" height="20" fill="#f0f0f0"/><use href="#fi"/></svg>
<div class="fn" style="top:962px">sub_1C8C</div>
<div class="sgw" style="top:961px"><div class="sg">.text</div></div>
<div class="row" style="top:981px;background:#d9d9d9;border:1px solid #a0a0a0;border-right:none"></div>
<svg class="ic" style="top:981px" width="22" height="20" viewBox="0 0 22 20"><rect x="0" y="0" width="22" height="20" fill="#acd0f0"/><use href="#fi"/></svg>
<div class="fn" style="top:982px">sub_1E1A</div>
<div class="sgw" style="top:981px"><div class="sg">.text</div></div>
<svg class="ic" style="top:1001px" width="22" height="20" viewBox="0 0 22 20"><rect x="0" y="0" width="22" height="20" fill="#f0f0f0"/><use href="#fi"/></svg>
<div class="fn" style="top:1002px">main</div>
<div class="sgw" style="top:1001px"><div class="sg">.text</div></div>
<svg class="ic" style="top:1021px" width="22" height="20" viewBox="0 0 22 20"><rect x="0" y="0" width="22" height="20" fill="#f0f0f0"/><use href="#fi"/></svg>
<div class="fn" style="top:1022px">_term_proc</div>
<div class="sgw" style="top:1021px"><div class="sg">.fini</div></div>
<div class="row" style="top:1041px;background:#ffe6ff"></div>
<svg class="ic" style="top:1041px" width="22" height="20" viewBox="0 0 22 20"><rect x="0" y="0" width="22" height="20" fill="#f0f0f0"/><use href="#fi"/></svg>
<div class="fn" style="top:1042px">MQTTClient_subscribe</div>
<div class="sgw" style="top:1041px"><div class="sg">extern</div></div>
<div class="row" style="top:1061px;background:#ffe6ff"></div>
<svg class="ic" style="top:1061px" width="22" height="20" viewBox="0 0 22 20"><rect x="0" y="0" width="22" height="20" fill="#f0f0f0"/><use href="#fi"/></svg>
<div class="fn b" style="top:1062px">__libc_start_main</div>
<div class="sgw" style="top:1061px"><div class="sg b">extern</div></div>
<div class="row" style="top:1081px;background:#ffe6ff"></div>
<svg class="ic" style="top:1081px" width="22" height="20" viewBox="0 0 22 20"><rect x="0" y="0" width="22" height="20" fill="#f0f0f0"/><use href="#fi"/></svg>
<div class="fn b" style="top:1082px">strncpy</div>
<div class="sgw" style="top:1081px"><div class="sg b">extern</div></div>
<div class="a" style="left:510px;top:151px;width:4px;height:943px;background:#f0f0f0"></div>
<div class="a" style="left:514px;top:151px;width:1249px;height:32px;background:#f0f0f0"></div>
<div class="a" style="left:516px;top:153px;width:288px;height:29px;background:#f3f3f3;border-top:1px solid #dcdcdc;border-left:1px solid #e0e0e0"></div>
<div class="a" style="left:1100px;top:153px;width:290px;height:29px;background:#f3f3f3;border-top:1px solid #dcdcdc;border-left:1px solid #e0e0e0"></div>
<div class="a" style="left:1390px;top:153px;width:292px;height:29px;background:#f3f3f3;border-top:1px solid #dcdcdc;border-left:1px solid #e0e0e0"></div>
<div class="a" style="left:1682px;top:153px;width:81px;height:29px;background:#f3f3f3;border-top:1px solid #dcdcdc;border-left:1px solid #e0e0e0"></div>
<div class="a" style="left:514px;top:182px;width:1249px;height:1px;background:#9c9c9c"></div>
<div class="a" style="left:804px;top:151px;width:296px;height:32px;background:#f9f9f9;border-top:1px solid #e4e4e4"></div>
<svg class="a" style="left:0;top:140px" width="1763" height="50" viewBox="0 140 1763 50"><rect x="532.5" y="160.5" width="15" height="15" rx="1.5" fill="#fafafa" stroke="#6f6f6f" stroke-width="1"/><rect x="533" y="161" width="14" height="2.6" fill="#0fd0fa"/><rect x="535" y="165" width="10" height="9.5" rx="1" fill="#c8c8c8"/><rect x="536.5" y="166.3" width="1.3" height="1.2" fill="#1a7fd0"/><rect x="538.8" y="166.3" width="4.5" height="1.2" fill="#222"/><rect x="536.5" y="168.3" width="1.3" height="1.2" fill="#1a7fd0"/><rect x="538.8" y="168.3" width="4.5" height="1.2" fill="#222"/><rect x="536.5" y="170.3" width="1.3" height="1.2" fill="#1a7fd0"/><rect x="538.8" y="170.3" width="4.5" height="1.2" fill="#222"/><rect x="536.5" y="172.3" width="1.3" height="1.2" fill="#1a7fd0"/><rect x="538.8" y="172.3" width="4.5" height="1.2" fill="#222"/><rect x="768.6" y="162.6" width="12.8" height="12.8" rx="2" fill="#bdbdbd" stroke="#a9a9a9" stroke-width="1.1"/><path d="M772 166l6 6M778 166l-6 6" stroke="#fff" stroke-width="1.9"/><rect x="824.5" y="158.5" width="15" height="15" rx="1.5" fill="#fafafa" stroke="#6f6f6f" stroke-width="1"/><rect x="825" y="159" width="14" height="2.6" fill="#0fd0fa"/><rect x="827" y="163" width="10" height="9.5" rx="1" fill="#c8c8c8"/><rect x="828.5" y="164.3" width="1.3" height="1.2" fill="#1a7fd0"/><rect x="830.8" y="164.3" width="4.5" height="1.2" fill="#222"/><rect x="828.5" y="166.3" width="1.3" height="1.2" fill="#1a7fd0"/><rect x="830.8" y="166.3" width="4.5" height="1.2" fill="#222"/><rect x="828.5" y="168.3" width="1.3" height="1.2" fill="#1a7fd0"/><rect x="830.8" y="168.3" width="4.5" height="1.2" fill="#222"/><rect x="828.5" y="170.3" width="1.3" height="1.2" fill="#1a7fd0"/><rect x="830.8" y="170.3" width="4.5" height="1.2" fill="#222"/><rect x="1061.6" y="160.6" width="12.8" height="12.8" rx="2" fill="#e2784e" stroke="#e23a22" stroke-width="1.3"/><path d="M1065 164l6 6M1071 164l-6 6" stroke="#fff" stroke-width="1.9"/><rect x="1117.5" y="160.5" width="15" height="15" rx="1.5" fill="#5ee6a0" stroke="#6f6f6f"/><rect x="1118" y="161" width="14" height="2.6" fill="#0fd0fa"/><circle cx="1123.2" cy="168" r="1.5" fill="#0a2010"/><path d="M1124.6 168.2q0 2.4-2.2 3.4" stroke="#0a2010" stroke-width="1" fill="none"/><circle cx="1127" cy="168" r="1.5" fill="#0a2010"/><path d="M1128.4 168.2q0 2.4-2.2 3.4" stroke="#0a2010" stroke-width="1" fill="none"/><rect x="1353.6" y="162.6" width="12.8" height="12.8" rx="2" fill="#bdbdbd" stroke="#a9a9a9" stroke-width="1.1"/><path d="M1357 166l6 6M1363 166l-6 6" stroke="#fff" stroke-width="1.9"/><rect x="1409.5" y="160.5" width="15" height="15" rx="1.5" fill="#fafafa" stroke="#6f6f6f" stroke-width="1"/><rect x="1410" y="161" width="14" height="2.6" fill="#0fd0fa"/><circle cx="1417" cy="169" r="4.5" fill="none" stroke="#222" stroke-width="1"/><ellipse cx="1417" cy="171" rx="2.5" ry="2" fill="#33dd77" stroke="#222" stroke-width="1"/><rect x="1645.6" y="162.6" width="12.8" height="12.8" rx="2" fill="#bdbdbd" stroke="#a9a9a9" stroke-width="1.1"/><path d="M1649 166l6 6M1655 166l-6 6" stroke="#fff" stroke-width="1.9"/><rect x="1701.5" y="160.5" width="15" height="15" rx="1.5" fill="#fafafa" stroke="#6f6f6f" stroke-width="1"/><rect x="1702" y="161" width="14" height="2.6" fill="#0fd0fa"/><circle cx="1709" cy="169" r="4.2" fill="#111"/><rect x="1708.3" y="166" width="1.5" height="5.5" fill="#f4f4f4"/></svg>
<div class="ss" style="left:612px;top:160px">IDA View-A</div>
<div class="ss" style="left:893px;top:158px">Pseudocode-A</div>
<div class="ss" style="left:1209px;top:160px">Strings</div>
<div class="ss" style="left:1487px;top:160px">Hex View-1</div>
<div class="a" style="left:514px;top:183px;width:1249px;height:911px;background:#fff"></div>
<div class="a" style="left:567px;top:183px;width:5px;height:911px;background:#f0f0f0"></div>
<div class="a" style="left:572px;top:184px;width:1191px;height:23px;background:#e6e6e6"></div>
<div class="a" style="left:572px;top:184px;width:44px;height:23px;background:#e4e436"></div>
<div class="a" style="left:968px;top:184px;width:44px;height:23px;background:#e4e436"></div>
<div class="a" style="left:572px;top:184px;width:2px;height:23px;background:#000"></div>
<div class="ln" style="top:186px">1</div>
<div class="code" style="top:187px"><span class="g">void __fastcall __noreturn sub_1E1A</span>(<span class="g">void *a1</span>)</div>
<div class="ln" style="top:209px">2</div>
<div class="code" style="top:210px">{</div>
<div class="ln" style="top:232px">3</div>
<div class="code" style="top:233px">  const char *p_status_unavailable; <span class="v">// [rsp+18h] [rbp-218h]</span></div>
<div class="ln" style="top:255px">4</div>
<div class="code" style="top:256px">  char s[520]; <span class="v">// [rsp+20h] [rbp-210h] BYREF</span></div>
<div class="ln" style="top:278px">5</div>
<div class="code" style="top:279px">  unsigned __int64 v3; <span class="v">// [rsp+228h] [rbp-8h]</span></div>
<div class="ln" style="top:301px">6</div>
<div class="code" style="top:302px"></div>
<div class="ln" style="top:324px">7</div>
<div class="dot" style="top:328px"></div>
<div class="code" style="top:325px">  <span class="v">v3</span> = <span class="f">__readfsqword</span>(0x28u);</div>
<div class="ln" style="top:347px">8</div>
<div class="dot" style="top:351px"></div>
<div class="code" style="top:348px">  while ( 1 )</div>
<div class="ln" style="top:370px">9</div>
<div class="code" style="top:371px">  {</div>
<div class="ln" style="top:393px">10</div>
<div class="dot" style="top:397px"></div>
<div class="code" style="top:394px">    <span class="v">p_status_unavailable</span> = (<span class="g">const char *</span>)<span class="f">sub_167C</span>(<span class="s">"/dev/status"</span>);</div>
<div class="ln" style="top:416px">11</div>
<div class="dot" style="top:420px"></div>
<div class="code" style="top:417px">    if ( !<span class="v">p_status_unavailable</span> )</div>
<div class="ln" style="top:439px">12</div>
<div class="dot" style="top:443px"></div>
<div class="code" style="top:440px">      <span class="v">p_status_unavailable</span> = <span class="s">"status_unavailable"</span>;</div>
<div class="ln" style="top:462px">13</div>
<div class="dot" style="top:466px"></div>
<div class="code" style="top:463px">    <span class="f">snprintf</span>(<span class="v">s</span>, 0x200u, <span class="s">"{\"vin\":\"%s\",\"status\":\"%s\"}"</span>, <span class="f">p_dest</span>, <span class="v">p_status_unavailable</span>);</div>
<div class="ln" style="top:485px">14</div>
<div class="dot" style="top:489px"></div>
<div class="code" style="top:486px">    <span class="f">sub_1702</span>(<span class="v">s</span>);</div>
<div class="ln" style="top:508px">15</div>
<div class="dot" style="top:512px"></div>
<div class="code" style="top:509px">    <span class="f">sleep</span>(0xAu);</div>
<div class="ln" style="top:531px">16</div>
<div class="code" style="top:532px">  }</div>
<div class="ln" style="top:554px">17</div>
<div class="dot" style="top:558px"></div>
<div class="code" style="top:555px">}</div>
</body></html>
